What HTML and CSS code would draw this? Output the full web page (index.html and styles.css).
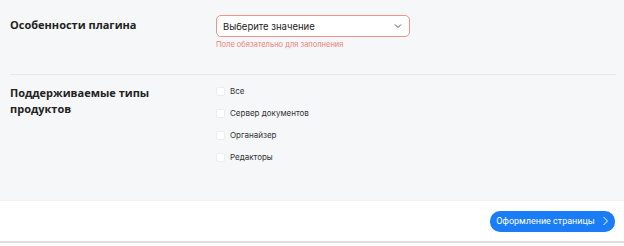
FILE: index.html
```html
<!DOCTYPE html>
<html lang="ru">

<head>
  <meta charset="UTF-8">
  <title>Настройки плагина</title>
  <link rel="stylesheet" href="styles.css">
</head>

<body>
  <div class="page">
    <section class="row row-first">
      <h3 class="row-title">Особенности плагина</h3>
      <div class="row-field">
        <div class="select">
          <span>Выберите значение</span>
          <svg width="8" height="6" viewBox="0 0 8 6"><path d="M1 1.5 L4 4.5 L7 1.5" fill="none" stroke="#555" stroke-width="1"/></svg>
        </div>
        <div class="error">Поле обязательно для заполнения</div>
      </div>
    </section>
    <div class="divider"></div>
    <section class="row row-second">
      <h3 class="row-title">Поддерживаемые типы продуктов</h3>
      <ul class="checks">
        <li><span class="box"></span>Все</li>
        <li><span class="box"></span>Сервер документов</li>
        <li><span class="box"></span>Органайзер</li>
        <li><span class="box"></span>Редакторы</li>
      </ul>
    </section>
  </div>
  <footer class="footer">
    <button class="next-btn">Оформление страницы
      <svg width="7" height="10" viewBox="0 0 7 10"><path d="M1.5 1 L5.5 5 L1.5 9" fill="none" stroke="#fff" stroke-width="1"/></svg>
    </button>
  </footer>
</body>

</html>
```

FILE: styles.css
```css
* {
  padding: 0;
  margin: 0;
  box-sizing: border-box;
  font-family: "Inter", "Roboto", sans-serif;
}

body {
  background-color: #ffffff;
  width: 624px;
}

.page {
  background-color: #f6f7f9;
  height: 200px;
}

.row {
  display: grid;
  grid-template-columns: 206px 1fr;
  padding: 0 10px;
}

.row-first {
  padding-top: 15px;
  height: 74px;
}

.row-second {
  padding-top: 10px;
}

.row-title {
  font-family: "Open Sans", sans-serif;
  font-size: 11px;
  font-weight: 700;
  color: #222222;
  line-height: 16px;
  width: 160px;
}

.row-first .row-title {
  padding-top: 2px;
}

.select {
  width: 194px;
  height: 22px;
  background: #ffffff;
  border: 1px solid #f29189;
  border-radius: 5px;
  display: flex;
  align-items: center;
  justify-content: space-between;
  padding: 0 7px 0 6px;
  font-size: 9.5px;
  color: #222222;
}

.error {
  margin-top: 3px;
  font-size: 7.5px;
  color: #ef7f78;
}

.divider {
  height: 1px;
  background-color: #e4e7ee;
  margin: 0 8px 0 10px;
}

.checks {
  list-style: none;
}

.checks li {
  display: flex;
  align-items: center;
  height: 22px;
  font-size: 8px;
  color: #333333;
}

.checks li:first-child {
  margin-top: -5px;
}

.box {
  width: 9px;
  height: 9px;
  background: #ffffff;
  border: 1px solid #ebedf1;
  border-radius: 2px;
  margin-right: 5px;
}

.footer {
  height: 43px;
  border-top: 1px solid #eef0f3;
  border-bottom: 2px solid #dedfe2;
  display: flex;
  justify-content: flex-end;
  align-items: center;
  padding-right: 9px;
}

.next-btn {
  height: 21px;
  width: 125px;
  background-color: #1a7cf6;
  color: #ffffff;
  border: none;
  border-radius: 10px;
  font-family: "Roboto", sans-serif;
  font-size: 9px;
  display: flex;
  align-items: center;
  justify-content: center;
  gap: 7px;
}
```
